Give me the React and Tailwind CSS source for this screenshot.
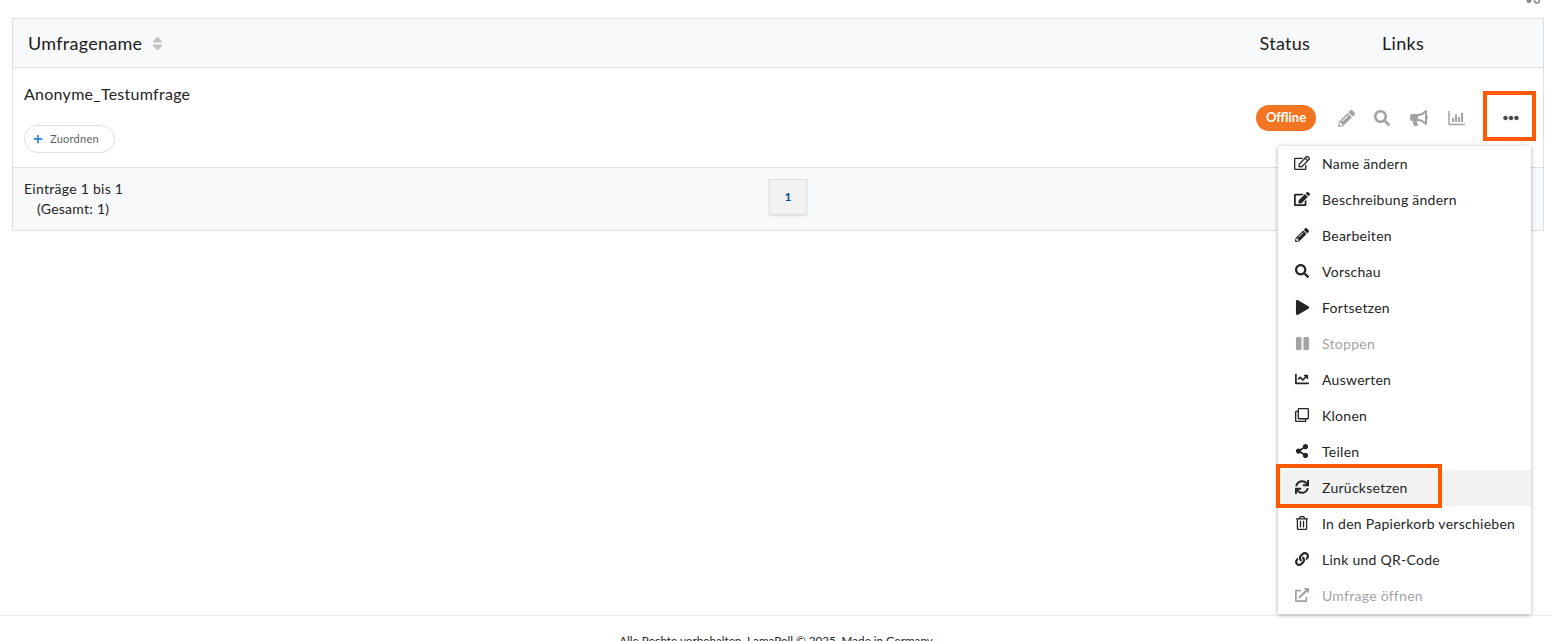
import React from 'react';
import {
  FaRegEdit, FaEdit, FaPencilAlt, FaSearch, FaPlay, FaPause, FaChartLine, FaRegClone,
  FaShareAlt, FaSync, FaRegTrashAlt, FaLink, FaExternalLinkAlt, FaBullhorn, FaEllipsisH,
  FaPlus, FaSort,
} from 'react-icons/fa';

const menuItems = [
  { label: 'Name ändern', icon: FaRegEdit, size: 16 },
  { label: 'Beschreibung ändern', icon: FaEdit, size: 16 },
  { label: 'Bearbeiten', icon: FaPencilAlt, size: 14 },
  { label: 'Vorschau', icon: FaSearch, size: 14 },
  { label: 'Fortsetzen', icon: FaPlay, size: 15 },
  { label: 'Stoppen', icon: FaPause, size: 15, disabled: true },
  { label: 'Auswerten', icon: FaChartLine, size: 14 },
  { label: 'Klonen', icon: FaRegClone, size: 14 },
  { label: 'Teilen', icon: FaShareAlt, size: 14 },
  { label: 'Zurücksetzen', icon: FaSync, size: 14 },
  { label: 'In den Papierkorb verschieben', icon: FaRegTrashAlt, size: 14 },
  { label: 'Link und QR-Code', icon: FaLink, size: 14 },
  { label: 'Umfrage öffnen', icon: FaExternalLinkAlt, size: 14, disabled: true },
];

const BarsIcon = () => (
  <svg width="17" height="16" viewBox="0 0 17 16" fill="none" stroke="#a3a3a3">
    <path d="M1 1v13.5h16" strokeWidth="1.5" />
    <path d="M5 12V8M8 12V4.500M11 12V7M14 12V3" strokeWidth="2" />
  </svg>
);

const RowMenu = () => (
  <div className="absolute left-[1278px] top-[146px] w-[253px] bg-white shadow-[0_1px_5px_rgba(0,0,0,0.3)]">
    {menuItems.map(item => {
      const Icon = item.icon;
      return (
        <div
          key={item.label}
          className={`flex h-9 items-center pb-[2px] pl-4 text-[14px] ${
            item.label === 'Zurücksetzen' ? 'bg-[#f2f2f2]' : ''
          } ${item.disabled ? 'text-[#a3a3a3]' : 'text-[#252525]'}`}
        >
          <span className="mr-3 flex w-4 shrink-0 justify-center">
            <Icon size={item.size} />
          </span>
          {item.label}
        </div>
      );
    })}
  </div>
);

export default function App() {
  return (
    <div className="relative flex h-[641px] flex-col overflow-hidden bg-white font-['Lato','Open_Sans',sans-serif] tracking-[0.27px] text-[#252525]">
      <div className="pl-3 pr-2 pt-[18px]">
        <div className="border border-[#dfdfdf]">
          <div className="flex h-[48px] items-center bg-[#f8f9fb] pl-[15px] text-[18px] text-[#1b1b1b]">
            <span>Umfragename</span>
            <FaSort size={17} className="ml-[7px] text-[#c4c4c4]" />
            <span className="ml-auto">Status</span>
            <span className="ml-[72px] mr-[119px]">Links</span>
          </div>
          <div className="flex h-[101px] items-start justify-between border-y border-[#dfdfdf] pl-[11px]">
            <div className="flex flex-col items-start pt-[14px]">
              <span className="text-[16px] leading-[24px]">Anonyme_Testumfrage</span>
              <button className="mt-[19px] flex h-7 w-[91px] items-center rounded-full border border-[#dfdfdf] pl-2 text-[11px] text-[#5f5f5f]">
                <FaPlus size={10} className="mr-[7px] text-[#3f8fd8]" />
                Zuordnen
              </button>
            </div>
            <div className="flex items-center pt-[37px] pr-[20px] text-[#a3a3a3]">
              <span className="mr-[22px] flex h-[26px] w-[60px] items-center justify-center rounded-full bg-[#f47521] text-[13px] font-bold tracking-normal text-white">
                Offline
              </span>
              <FaPencilAlt size={17} className="mr-[19px]" />
              <FaSearch size={16} className="mr-[20px]" />
              <FaBullhorn size={18} className="mr-[20px]" />
              <BarsIcon />
              <span className="ml-[38px] mr-[4px] flex text-[#4a4a4a]">
                <FaEllipsisH size={16} />
              </span>
            </div>
          </div>
          <div className="relative flex h-[62px] items-start bg-[#f8f9fb] pl-[11px] pt-[11px] text-[14px] leading-[20px]">
            <div>
              <div>Einträge 1 bis 1</div>
              <div className="pl-[13px]">(Gesamt: 1)</div>
            </div>
            <span className="absolute left-[756px] top-[11px] flex h-9 w-[38px] items-center justify-center border border-[#dfdfdf] bg-[#f2f2f2] text-[12px] font-bold text-[#0b4f8a] shadow-[0_1px_2px_rgba(0,0,0,0.12)]">
              1
            </span>
          </div>
        </div>
      </div>

      <footer className="mt-[384px] border-t border-[#eeeeee] pt-[15px] text-center text-[11.7px] leading-[18px] tracking-normal text-[#252525]">
        Alle Rechte vorbehalten. LamaPoll © 2025. Made in Germany
      </footer>

      <RowMenu />

      {/* icon cut off by the top edge of the screenshot */}
      <svg className="absolute left-[1526px] top-0" width="16" height="5" viewBox="0 0 16 5" fill="none">
        <circle cx="3" cy="0.500" r="2.500" fill="#8a8a8a" />
        <circle cx="11" cy="0.500" r="2.500" stroke="#8a8a8a" strokeWidth="1.500" />
      </svg>

      {/* orange annotation boxes from the screenshot */}
      <div className="absolute left-[1483px] top-[91px] h-[50px] w-[53px] border-4 border-[#ff5a00]" />
      <div className="absolute left-[1276px] top-[464px] h-[44px] w-[166px] border-4 border-[#ff5a00]" />
    </div>
  );
}
